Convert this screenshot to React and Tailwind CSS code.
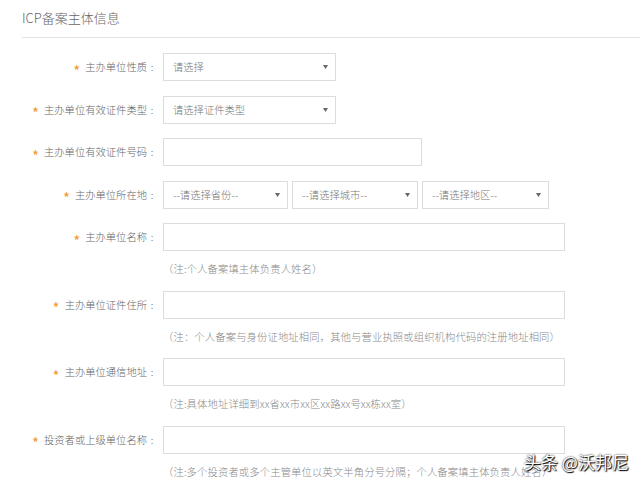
import React from 'react';

const FONT = { fontFamily: '"Noto Sans CJK SC", "Noto Sans", sans-serif' };

function Arrow() {
  return (
    <svg width="5" height="4" viewBox="0 0 5 4" className="shrink-0">
      <path d="M0 0 L5 0 L2.5 4 Z" fill="#666" />
    </svg>
  );
}

function Select({ text, width }) {
  return (
    <div className={`${width} h-[28px] border border-[#dcdcdc] bg-white flex items-center justify-between pl-[9px] pr-[7px]`}>
      <span className="text-[10.3px] text-[#777] font-light">{text}</span>
      <Arrow />
    </div>
  );
}

function Input({ width }) {
  return <div className={`${width} h-[28px] border border-[#dcdcdc] bg-white`} />;
}

function Field({ label, children, note }) {
  return (
    <div className="flex flex-col">
      <div className="flex items-center">
        <div className="w-[141px] flex justify-end items-center pr-[6px] text-[10.3px] text-[#666] font-light">
          <span className="text-[#f39a32] text-[15px] font-normal mr-[5px] leading-none relative top-[3px]">*</span>
          <span>{label}</span>
          <span className="w-[10px] text-center">:</span>
        </div>
        <div className="flex gap-[4px]">{children}</div>
      </div>
      {note && (
        <div className="ml-[141px] mt-[11px] leading-[14px] text-[10.3px] text-[#888] font-light whitespace-nowrap tracking-[0.15px]">{note}</div>
      )}
    </div>
  );
}

export default function App() {
  return (
    <div className="w-[640px] h-[486px] bg-white relative overflow-hidden" style={FONT}>
      <div className="pl-[22px]">
        <div className="h-[38px] border-b border-[#e3e3e3] pt-[10px] text-[13px] leading-[16px] text-[#666] font-light">ICP备案主体信息</div>
        <div className="flex flex-col gap-[14.5px] pt-[15px] -ml-[22px] pl-[22px]">
          <Field label="主办单位性质">
            <Select text="请选择" width="w-[173px]" />
          </Field>
          <Field label="主办单位有效证件类型">
            <Select text="请选择证件类型" width="w-[173px]" />
          </Field>
          <Field label="主办单位有效证件号码">
            <Input width="w-[259px]" />
          </Field>
          <Field label="主办单位所在地">
            <Select text="--请选择省份--" width="w-[125px]" />
            <Select text="--请选择城市--" width="w-[126px]" />
            <Select text="--请选择地区--" width="w-[127px]" />
          </Field>
          <Field label="主办单位名称" note="（注:个人备案填主体负责人姓名）">
            <Input width="w-[402px]" />
          </Field>
          <Field label="主办单位证件住所" note="（注：个人备案与身份证地址相同，其他与营业执照或组织机构代码的注册地址相同）">
            <Input width="w-[402px]" />
          </Field>
          <Field label="主办单位通信地址" note="（注:具体地址详细到xx省xx市xx区xx路xx号xx栋xx室）">
            <Input width="w-[402px]" />
          </Field>
          <Field label="投资者或上级单位名称" note="（注:多个投资者或多个主管单位以英文半角分号分隔；个人备案填主体负责人姓名）">
            <Input width="w-[402px]" />
          </Field>
        </div>
      </div>
      <div className="absolute left-[524px] top-[452px] text-[17px] leading-[20px] text-white whitespace-nowrap [text-shadow:0_0_2px_#000,1px_1px_1px_#000]">
        头条 @沃邦尼
      </div>
    </div>
  );
}
